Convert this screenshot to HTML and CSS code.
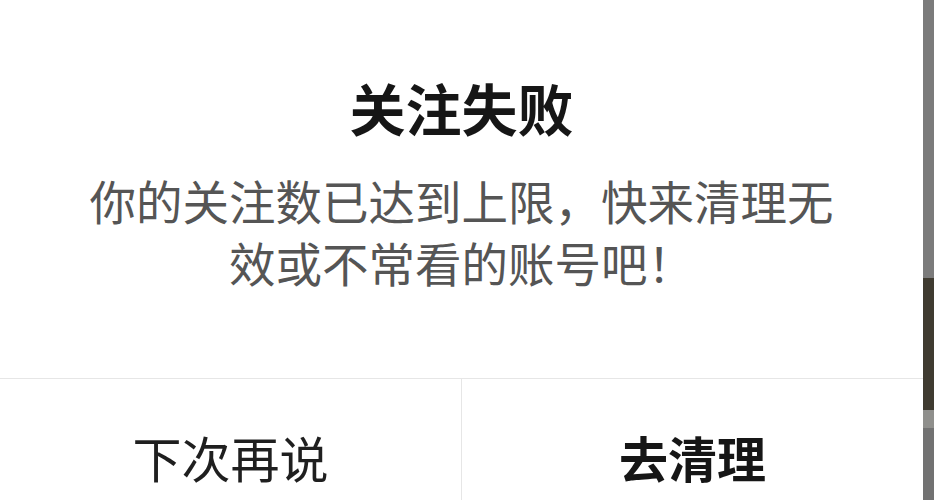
FILE: index.html
```html
<!DOCTYPE html>
<html lang="zh-CN">
<head>
  <meta charset="UTF-8" />
  <meta name="viewport" content="width=device-width, initial-scale=1.0" />
  <title>关注失败</title>
  <link rel="stylesheet" href="styles.css">
</head>
<body>

  <div class="screen">
    <div class="dialog">
      <div class="dialog-body">
        <h2 class="dialog-title">关注失败</h2>
        <p class="dialog-text">你的关注数已达到上限，快来清理无效或不常看的账号吧！</p>
      </div>
      <div class="dialog-actions">
        <button class="action">下次再说</button>
        <button class="action primary">去清理</button>
      </div>
    </div>

    <!-- page behind the dialog, dimmed -->
    <div class="backdrop">
      <div class="band band-top"></div>
      <div class="band band-dark"></div>
      <div class="band band-light"></div>
      <div class="band band-bottom"></div>
    </div>
  </div>

</body>
</html>
```

FILE: styles.css
```css
html, body { margin: 0; height: 100%; overflow: hidden; }
body {
  font-family: "Noto Sans CJK SC", "Noto Sans", sans-serif;
  background: #fff;
}
.screen {
  display: flex;
  height: 500px;
  width: 934px;
}
.dialog {
  width: 923px;
  background: #fff;
  display: flex;
  flex-direction: column;
  overflow: hidden;
}
.dialog-body {
  height: 379px;
  flex-shrink: 0;
  box-sizing: border-box;
  padding: 67px 80px 0;
  text-align: center;
  border-bottom: 1px solid #e6e6e6;
}
.dialog-title {
  margin: 0;
  font-size: 56px;
  line-height: 80px;
  font-weight: 700;
  color: #161616;
}
.dialog-text {
  margin: 22px 0 0;
  font-size: 46.5px;
  line-height: 62px;
  color: #555;
}
.dialog-actions {
  display: flex;
  height: 154px;
  flex-shrink: 0;
}
.action {
  flex: 1;
  border: none;
  background: none;
  padding: 0;
  font-family: inherit;
  font-size: 49px;
  color: #1f1f1f;
}
.action + .action { border-left: 1px solid #e6e6e6; }
.action.primary { font-weight: 700; color: #161616; }

.backdrop {
  flex: 1;
  display: flex;
  flex-direction: column;
}
.band-top { height: 278px; background: #7b7b7b; }
.band-dark { height: 132px; background: #3f3b31; }
.band-light { height: 18px; background: #8f8f8c; }
.band-bottom { flex: 1; background: #727272; }
```
